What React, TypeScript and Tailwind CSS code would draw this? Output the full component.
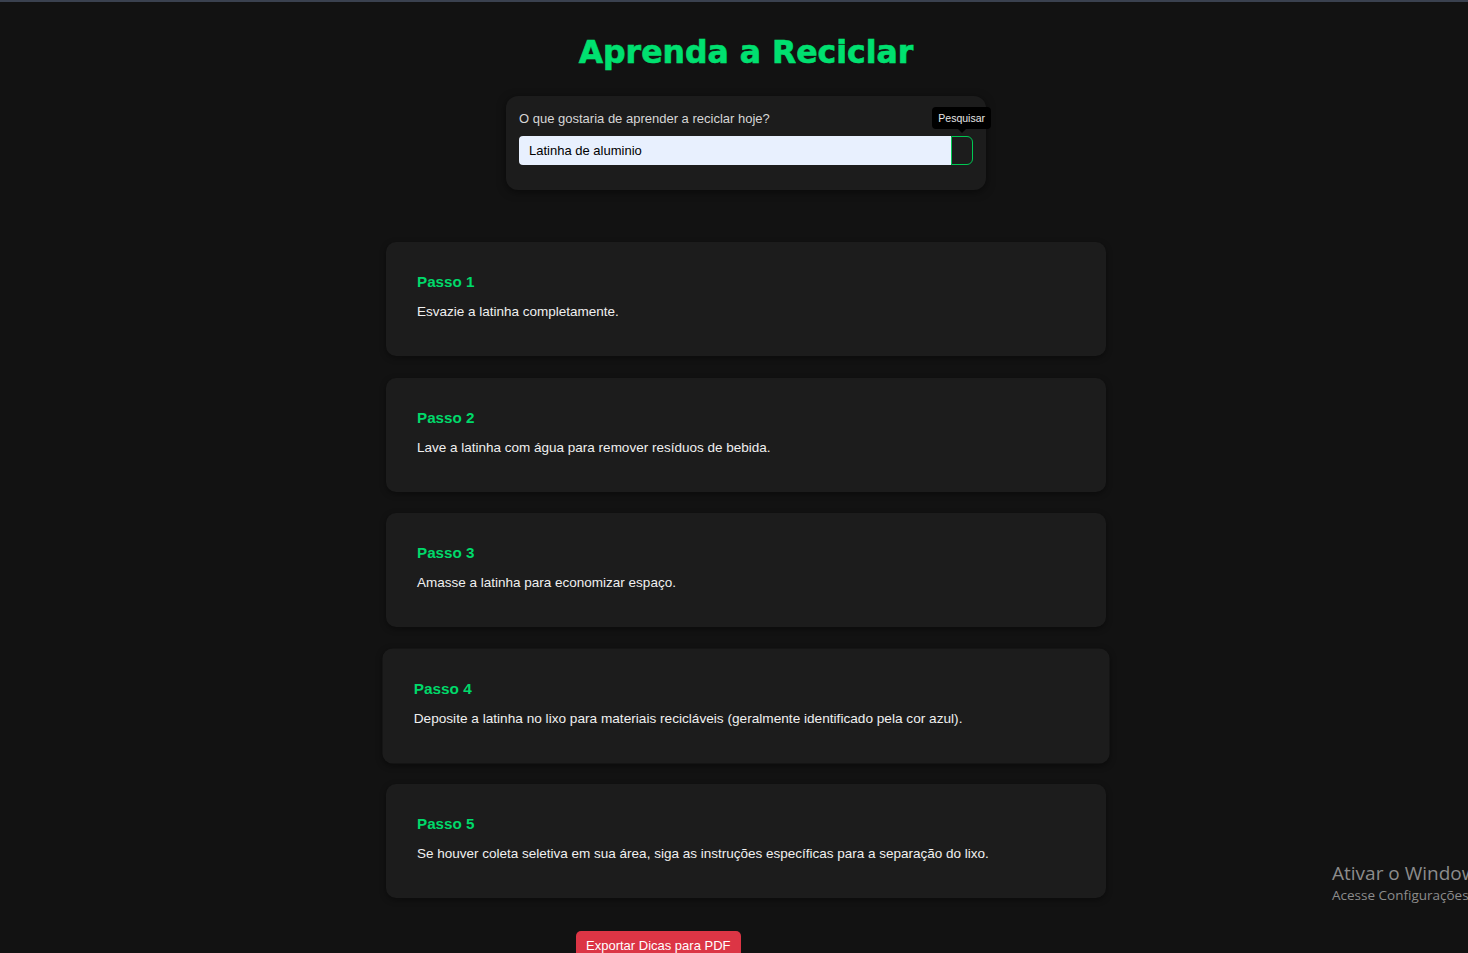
import React from "react";

const steps = [
  "Esvazie a latinha completamente.",
  "Lave a latinha com água para remover resíduos de bebida.",
  "Amasse a latinha para economizar espaço.",
  "Deposite a latinha no lixo para materiais recicláveis (geralmente identificado pela cor azul).",
  "Se houver coleta seletiva em sua área, siga as instruções específicas para a separação do lixo.",
];

export default function App() {
  return (
    <div className="relative h-[953px] w-full overflow-hidden bg-[#121212] font-['Liberation_Sans',Arial,sans-serif]">
      <div className="h-[2px] w-full bg-[#3a414f]" />
      <div className="flex flex-col items-center pl-[24px]">
        <h1 className="mt-[31px] font-['DejaVu_Sans',sans-serif] text-[31.5px] font-bold leading-[38px] text-[#00e070] [-webkit-text-stroke:0.6px_#00e070]">
          Aprenda a Reciclar
        </h1>

        <div className="mt-[25px] w-[480px] rounded-xl bg-[#1c1c1c] px-[13px] pb-[25px] pt-[15px] shadow-[0_2px_8px_rgba(0,0,0,0.5)]">
          <label className="block text-[13px] leading-[15px] text-[#d6d6d6]">
            O que gostaria de aprender a reciclar hoje?
          </label>
          <div className="relative mt-[10px] flex h-[29px]">
            <div className="flex flex-1 items-center rounded-l-[4px] bg-[#e8f0fe] pl-[10px] text-[13px] text-black">
              Latinha de aluminio
            </div>
            <button className="h-[29px] w-[22px] rounded-r-[6px] border border-[#00c853] bg-[#1c1c1c]" />
            <div className="absolute right-[-18px] top-[-29px] flex flex-col items-center">
              <div className="rounded-[4px] bg-black px-[6px] py-[4px] text-[10.5px] leading-[14px] text-[#e6e6e6]">
                Pesquisar
              </div>
              <div className="h-0 w-0 border-l-[4px] border-r-[4px] border-t-[4px] border-l-transparent border-r-transparent border-t-black" />
            </div>
          </div>
        </div>

        <div className="mt-[52px] flex flex-col gap-[21.5px]">
          {steps.map((s, i) => (
            <div
              key={i}
              className={`h-[114px] w-[720px] rounded-[10px] bg-[#1c1c1c] px-[31px] pt-[31px] shadow-[0_2px_6px_rgba(0,0,0,0.4)] ${
                i === 3 ? "scale-[1.01]" : ""
              }`}
            >
              <h3 className="text-[15.2px] font-bold leading-[18px] text-[#00d96a]">
                Passo {i + 1}
              </h3>
              <p className="mt-[12px] text-[13.5px] leading-[18px] text-[#f0f0f0]">{s}</p>
            </div>
          ))}
        </div>
      </div>

      <div className="absolute left-[576px] top-[931px] rounded-[5px] bg-[#dc3545] px-[10px] pb-[12px] pt-[7px] text-[13px] leading-[16px] text-white">
        Exportar Dicas para PDF
      </div>

      <div className="pointer-events-none absolute left-[1332px] top-[861px] whitespace-nowrap font-['Open_Sans',sans-serif] text-[#8c8c8c]">
        <div className="text-[19px] leading-[24px]">Ativar o Windows</div>
        <div className="text-[13.5px] leading-[20px]">Acesse Configurações para ativar o Windows.</div>
      </div>
    </div>
  );
}
